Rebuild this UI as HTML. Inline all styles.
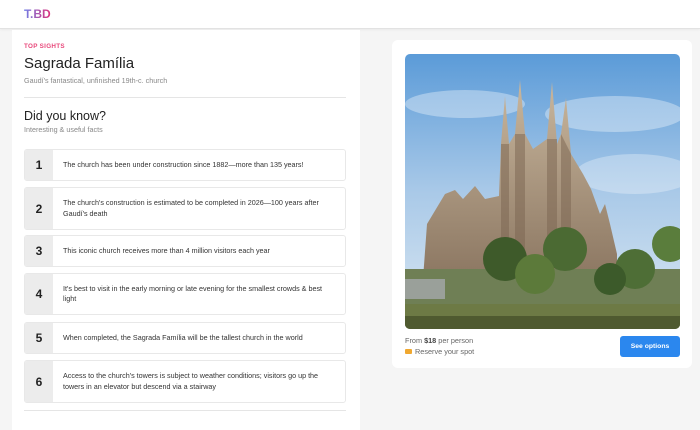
<!DOCTYPE html>
<html><head><style>
*{box-sizing:border-box;margin:0;padding:0}
body{width:700px;height:421px;overflow:hidden;background:#f5f5f5;font-family:"Liberation Sans",Arial,sans-serif;position:relative}
.hdr{position:absolute;left:0;top:0;width:700px;height:29px;background:#fff;border-bottom:1px solid #e2e2e2;box-shadow:0 1px 2px rgba(0,0,0,.05)}
.logo{position:absolute;left:24px;top:7px;font-weight:bold;font-size:12px;background:linear-gradient(90deg,#6f7fe8,#e0307a);-webkit-background-clip:text;color:transparent}
.left{position:absolute;left:12px;top:30px;width:348px;height:400px;background:#fff}
.tag{position:absolute;left:12px;top:13px;font-size:6.3px;font-weight:bold;color:#e8477a;letter-spacing:.3px}
h1{position:absolute;left:12px;top:25px;font-size:15px;font-weight:normal;color:#222}
.sub{position:absolute;left:12px;top:46px;font-size:7.2px;color:#888}
.hr{position:absolute;left:12px;width:322px;height:1px;background:#e5e5e5}
h2{position:absolute;left:12px;top:79px;font-size:12.5px;font-weight:normal;color:#222}
.sub2{position:absolute;left:12px;top:95px;font-size:7.2px;color:#888}
.item{position:absolute;left:12px;width:322px;border:1px solid #e8e8e8;border-radius:3px;display:flex;align-items:center;overflow:hidden}
.num{position:absolute;left:0;top:0;bottom:0;width:28px;background:#ececec;display:flex;align-items:center;justify-content:center;font-weight:bold;font-size:12px;color:#222}
.txt{margin-left:38px;font-size:7.2px;color:#333;line-height:10.5px;width:266px}
.right{position:absolute;left:392px;top:40px;width:300px;height:328px;background:#fff;border-radius:6px}
.img{position:absolute;left:13px;top:14px;width:275px;height:275px;border-radius:5px;overflow:hidden}
.from{position:absolute;left:13px;top:296px;font-size:7.3px;color:#666}
.from b{color:#444}
.res{position:absolute;left:13px;top:307px;font-size:7.3px;color:#666}
.tk{display:inline-block;width:7px;height:5px;background:#f0a830;border-radius:1px;margin-right:3px;vertical-align:0}
.btn{position:absolute;left:228px;top:296px;width:60px;height:21px;background:#2b87ee;border-radius:3px;color:#fff;font-size:6.8px;font-weight:bold;text-align:center;line-height:21px}
</style></head><body>
<div class="hdr"><div class="logo">T.BD</div></div>
<div class="left">
<div class="tag">TOP SIGHTS</div>
<h1>Sagrada Família</h1>
<div class="sub">Gaudí's fantastical, unfinished 19th-c. church</div>
<div class="hr" style="top:67px"></div>
<h2>Did you know?</h2>
<div class="sub2">Interesting &amp; useful facts</div>
<div class="item" style="top:119px;height:32px"><div class="num">1</div><div class="txt">The church has been under construction since 1882—more than 135 years!</div></div>
<div class="item" style="top:157px;height:43px"><div class="num">2</div><div class="txt">The church's construction is estimated to be completed in 2026—100 years after Gaudí's death</div></div>
<div class="item" style="top:205px;height:32px"><div class="num">3</div><div class="txt">This iconic church receives more than 4 million visitors each year</div></div>
<div class="item" style="top:243px;height:42px"><div class="num">4</div><div class="txt">It's best to visit in the early morning or late evening for the smallest crowds &amp; best light</div></div>
<div class="item" style="top:292px;height:32px"><div class="num">5</div><div class="txt">When completed, the Sagrada Família will be the tallest church in the world</div></div>
<div class="item" style="top:330px;height:43px"><div class="num">6</div><div class="txt">Access to the church's towers is subject to weather conditions; visitors go up the towers in an elevator but descend via a stairway</div></div>
<div class="hr" style="top:380px"></div>
</div>
<div class="right">
<div class="img"><svg width="275" height="275" viewBox="0 0 275 275">
<defs><linearGradient id="sk" x1="0" y1="0" x2="0" y2="1"><stop offset="0" stop-color="#5b9bd8"/><stop offset=".5" stop-color="#a9c9e8"/><stop offset="1" stop-color="#dbe8f2"/></linearGradient>
<linearGradient id="st" x1="0" y1="0" x2="0" y2="1"><stop offset="0" stop-color="#c9b79e"/><stop offset="1" stop-color="#8a7560"/></linearGradient></defs>
<rect width="275" height="275" fill="url(#sk)"/>
<ellipse cx="60" cy="50" rx="60" ry="14" fill="#fff" opacity=".35"/>
<ellipse cx="210" cy="60" rx="70" ry="18" fill="#fff" opacity=".35"/>
<ellipse cx="230" cy="120" rx="60" ry="20" fill="#fff" opacity=".3"/>
<path d="M18 225 L22 170 L40 140 L50 136 L58 145 L70 132 L80 145 L94 142 L96 90 L100 42 L104 90 L110 80 L115 26 L120 80 L128 95 L142 85 L147 28 L152 90 L156 80 L161 44 L166 100 L178 120 L186 135 L195 160 L200 150 L205 170 L212 200 L212 230 Z" fill="url(#st)"/>
<path d="M96 90 L104 90 L104 200 L96 200Z M110 80 L120 80 L120 200 L110 200Z M142 85 L152 85 L152 200 L142 200Z M156 80 L166 100 L166 200 L156 200Z" fill="#7a6450" opacity=".5"/>
<rect x="0" y="215" width="275" height="60" fill="#6f7f55"/>
<circle cx="100" cy="205" r="22" fill="#3e5a2a"/>
<circle cx="160" cy="195" r="22" fill="#4b6a33"/>
<circle cx="130" cy="220" r="20" fill="#5c7a3a"/>
<circle cx="230" cy="215" r="20" fill="#4e6e36"/>
<circle cx="265" cy="190" r="18" fill="#5a7d3c"/>
<circle cx="205" cy="225" r="16" fill="#3c5a2a"/>
<rect x="0" y="225" width="40" height="20" fill="#9aa09a"/>
<rect x="0" y="250" width="275" height="25" fill="#6d7a45"/>
<rect x="0" y="262" width="275" height="13" fill="#4f5a30"/>
</svg></div>
<div class="from">From <b>$18</b> per person</div>
<div class="res"><span class="tk"></span>Reserve your spot</div>
<div class="btn">See options</div>
</div>
</body></html>
